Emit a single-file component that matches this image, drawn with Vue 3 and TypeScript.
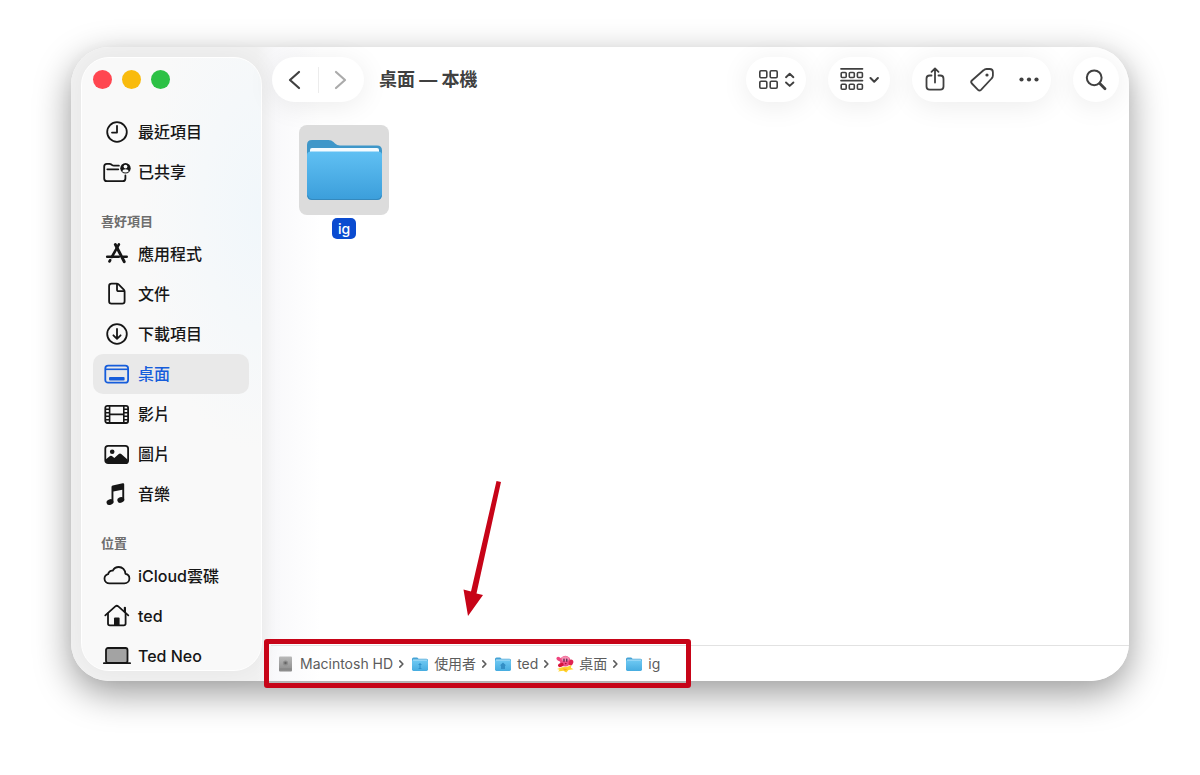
<script setup lang="ts">
import { ref } from 'vue'

interface Place {
  label: string
  icon: string
}
interface Section {
  title?: string
  places: Place[]
}
interface Crumb {
  label: string
  icon: string
}

const sections: Section[] = [
  {
    places: [
      { label: '最近項目', icon: 'clock' },
      { label: '已共享', icon: 'shared' },
    ],
  },
  {
    title: '喜好項目',
    places: [
      { label: '應用程式', icon: 'apps' },
      { label: '文件', icon: 'document' },
      { label: '下載項目', icon: 'download' },
      { label: '桌面', icon: 'desktop' },
      { label: '影片', icon: 'film' },
      { label: '圖片', icon: 'photo' },
      { label: '音樂', icon: 'music' },
    ],
  },
  {
    title: '位置',
    places: [
      { label: 'iCloud雲碟', icon: 'cloud' },
      { label: 'ted', icon: 'house' },
      { label: 'Ted Neo', icon: 'laptop' },
    ],
  },
]

const crumbs: Crumb[] = [
  { label: 'Macintosh HD', icon: 'disk' },
  { label: '使用者', icon: 'folder-users' },
  { label: 'ted', icon: 'folder-home' },
  { label: '桌面', icon: 'kirby' },
  { label: 'ig', icon: 'folder-small' },
]

const current = ref('桌面')
</script>

<template>
  <div class="screen">
    <svg class="sprite" aria-hidden="true">
      <defs>
        <linearGradient id="folder-front" x1="0" y1="0" x2="0" y2="1">
          <stop offset="0" stop-color="#60c0f3" />
          <stop offset="1" stop-color="#3b9edb" />
        </linearGradient>
        <linearGradient id="folder-mini" x1="0" y1="0" x2="0" y2="1">
          <stop offset="0" stop-color="#6fc9f3" />
          <stop offset="1" stop-color="#46ace0" />
        </linearGradient>
        <linearGradient id="disk-body" x1="0" y1="0" x2="0" y2="1">
          <stop offset="0" stop-color="#b9b9b9" />
          <stop offset="1" stop-color="#8a8a8a" />
        </linearGradient>
      </defs>

      <symbol id="clock" viewBox="0 0 28 28">
        <g fill="none" stroke="currentColor" stroke-width="1.8" stroke-linecap="round" stroke-linejoin="round">
          <circle cx="14" cy="14" r="9.8" />
          <path d="M14 7.8V14.6H9" />
        </g>
      </symbol>
      <symbol id="shared" viewBox="0 0 28 28">
        <g fill="none" stroke="currentColor" stroke-width="1.8" stroke-linecap="round" stroke-linejoin="round">
          <path d="M22.4 17.4v3q0 2.7-2.7 2.7H3.9q-2.7 0-2.7-2.7V8.4q0-2.6 2.6-2.6h2.6q1.2 0 2 .7l.7.6q.7.6 1.8.6h5M4.3 11.3h11" />
        </g>
        <circle cx="22.5" cy="10.2" r="5.2" fill="currentColor" />
        <circle cx="22.5" cy="8.6" r="1.9" fill="#fafbfb" />
        <path d="M19.2 13.300q.5-2.100 3.300-2.100t3.300 2.100q-1.400 1.200-3.300 1.200t-3.300-1.200Z" fill="#fafbfb" />
      </symbol>
      <symbol id="apps" viewBox="0 0 28 28">
        <g fill="none" stroke="currentColor" stroke-linecap="round">
          <path d="M12.4 4.6 21.2 21.6" stroke-width="3" />
          <path d="M15.900 4.400 8.800 17" stroke-width="2.600" />
          <path d="M4.200 16.800h11.600M20.400 16.800h3.300M6.400 21.500l.8-1.300" stroke-width="2.600" />
        </g>
      </symbol>
      <symbol id="document" viewBox="0 0 28 28">
        <g fill="none" stroke="currentColor" stroke-width="1.8" stroke-linejoin="round">
          <path d="M8.500 3.600h5.200q1.100 0 1.900.8l5.200 5.200q.8.8.8 2v9.600q0 2.400-2.400 2.400H8.500q-2.400 0-2.400-2.400V6q0-2.400 2.400-2.400Z" />
          <path d="M14 3.800v5.600q0 1.800 1.800 1.800h5.500" />
        </g>
      </symbol>
      <symbol id="download" viewBox="0 0 28 28">
        <g fill="none" stroke="currentColor" stroke-width="1.8" stroke-linecap="round" stroke-linejoin="round">
          <circle cx="14" cy="14" r="9.8" />
          <path d="M14 9v9.400M10.400 15.300l3.600 3.500 3.600-3.500" />
        </g>
      </symbol>
      <symbol id="desktop" viewBox="0 0 28 28">
        <g fill="none" stroke="currentColor" stroke-width="1.8">
          <rect x="2.300" y="5.700" width="22.800" height="17" rx="2.800" />
          <path d="M2.400 9.300h22.600" stroke-width="1.600" />
        </g>
        <rect x="6" y="17" width="15.600" height="3.500" rx="1" fill="currentColor" />
      </symbol>
      <symbol id="film" viewBox="0 0 28 28">
        <g fill="none" stroke="currentColor" stroke-width="1.8">
          <rect x="2.300" y="5.800" width="22.800" height="17.200" rx="2" />
          <path d="M6.600 5.800v17.200M20.800 5.800v17.200M6.600 14.400h14.200" stroke-width="1.600" />
          <path d="M2.400 9.200h4M2.400 12.700h4M2.400 16.200h4M2.400 19.700h4M21 9.200h4M21 12.700h4M21 16.200h4M21 19.700h4" stroke-width="1.400" />
        </g>
      </symbol>
      <symbol id="photo" viewBox="0 0 28 28">
        <rect x="2.300" y="5.800" width="22.800" height="17.400" rx="2.800" fill="none" stroke="currentColor" stroke-width="1.800" />
        <circle cx="9.200" cy="11.700" r="2.300" fill="currentColor" />
        <path d="M2.600 19.600 7 16.100q.9-.8 1.900 0l2.400 2 4.500-4.200q1.200-1 2.400 0l6.600 5.900v.8q0 2.400-2.400 2.400H5q-2.400 0-2.400-2.400Z" fill="currentColor" />
      </symbol>
      <symbol id="music" viewBox="0 0 28 28">
        <path d="M8.500 6.900q0-1.200 1.200-1.500l10-2.100q1.500-.3 1.500 1v16h-1.900V9.700l-8.900 1.900v10.900H8.500Z" fill="currentColor" />
        <ellipse cx="7" cy="22.100" rx="3.500" ry="2.800" transform="rotate(-18 7 22.100)" fill="currentColor" />
        <ellipse cx="17.800" cy="19.900" rx="3.500" ry="2.800" transform="rotate(-18 17.800 19.900)" fill="currentColor" />
      </symbol>
      <symbol id="cloud" viewBox="0 0 28 28">
        <path d="M6.600 21.300h14.700c3 0 5.100-2 5.100-4.800 0-2.500-1.600-4.400-4-4.700C22.300 8 19.400 5 15.800 5c-2.800 0-4.900 1.500-6 3.700-2.400-.4-4.400 1.200-4.600 3.500C3 12.800 1.500 14.500 1.500 16.700c0 2.700 2.200 4.600 5.100 4.600Z" fill="none" stroke="currentColor" stroke-width="1.800" stroke-linejoin="round" />
      </symbol>
      <symbol id="house" viewBox="0 0 28 28">
        <g fill="none" stroke="currentColor" stroke-width="1.800" stroke-linecap="round" stroke-linejoin="round">
          <path d="M2.300 13.300 12.600 4.200q1.200-1 2.400 0L25.300 13.300" />
          <path d="M5 11.500v10q0 1.800 1.800 1.800h14q1.800 0 1.800-1.800v-10" />
          <path d="M21.900 5.800v4" stroke-width="2.200" />
        </g>
        <path d="M11 23.500v-6.900q0-1 1-1h3.600q1 0 1 1v6.900Z" fill="currentColor" />
      </symbol>
      <symbol id="laptop" viewBox="0 0 28 28">
        <rect x="3" y="6" width="21.500" height="15" rx="2" fill="#a3a3a3" stroke="currentColor" stroke-width="1.800" />
        <path d="M.9 21.200h26.200" stroke="currentColor" stroke-width="1.800" stroke-linecap="round" />
      </symbol>

      <symbol id="disk" viewBox="0 0 18 18">
        <rect x="2" y="1.500" width="13" height="15" rx="1" fill="url(#disk-body)" />
        <path d="M2.500 14h12" stroke="#808080" stroke-width="1" />
        <circle cx="8.500" cy="8" r="2.600" fill="#8e8e8e" />
        <circle cx="8.500" cy="8" r="1.200" fill="#666" />
      </symbol>
      <symbol id="folder-small" viewBox="0 0 18 18">
        <path d="M1 4q0-1.600 1.600-1.600h3.600l1.400 1.300h7.900Q17 3.700 17 5.200V8H1Z" fill="#45a3d6" />
        <rect x="1" y="5" width="16" height="11" rx="1.400" fill="url(#folder-mini)" />
        <path d="M2 5h14" stroke="#b8e4fa" stroke-width="1" />
      </symbol>
      <symbol id="folder-users" viewBox="0 0 18 18">
        <use href="#folder-small" width="18" height="18" />
        <path d="M9 8v5M7.500 9.500h3M7.600 13.500h2.800" stroke="#2f92cb" stroke-width="1.100" fill="none" />
      </symbol>
      <symbol id="folder-home" viewBox="0 0 18 18">
        <use href="#folder-small" width="18" height="18" />
        <path d="M9 7.600 5.800 10.500H7v3.400h4v-3.400h1.200Z" fill="#348fc5" />
      </symbol>
      <symbol id="kirby" viewBox="0 0 18 18">
        <ellipse cx="2.900" cy="4" rx="2.600" ry="1.900" transform="rotate(35 2.900 4)" fill="#f0457f" />
        <circle cx="9.300" cy="6.200" r="5.400" fill="#ee4f86" />
        <ellipse cx="9.300" cy="3.700" rx="3.800" ry="2.500" fill="#f78db0" />
        <ellipse cx="15" cy="7.600" rx="2.200" ry="3" transform="rotate(20 15 7.600)" fill="#e02452" />
        <ellipse cx="4.800" cy="10" rx="2.900" ry="1.900" transform="rotate(-20 4.800 10)" fill="#d6153c" />
        <path d="M8 4v2.200M10.800 4v2.200" stroke="#3a1740" stroke-width="1.100" stroke-linecap="round" />
        <path d="M8.600 8h2.200l-1 1.500Z" fill="#a30f35" />
        <path d="m1 14 5-1.800 5.500-.4 4-1.800-.6 2.800 2.600 1.400-5 .8-2.200 2.500-3-1.800-5.300.8 1.700-1.800Z" fill="#ffd42e" />
        <path d="m6.500 13.600 5 .4-2.500 1.700Z" fill="#ffa51d" />
      </symbol>
    </svg>

    <div class="window">
      <aside class="sidebar">
        <div class="lights">
          <button class="light close" type="button" aria-label="關閉"></button>
          <button class="light minimize" type="button" aria-label="縮到最小"></button>
          <button class="light zoom" type="button" aria-label="縮放"></button>
        </div>
        <nav class="places" aria-label="側邊欄">
          <section v-for="(section, i) in sections" :key="i">
            <h2 v-if="section.title" class="heading">{{ section.title }}</h2>
            <ul>
              <li v-for="place in section.places" :key="place.label">
                <a
                  href="#"
                  class="place"
                  :class="{ active: place.label === current }"
                  @click.prevent="current = place.label"
                >
                  <svg class="place-icon" aria-hidden="true"><use :href="'#' + place.icon" /></svg>
                  <span>{{ place.label }}</span>
                </a>
              </li>
            </ul>
          </section>
        </nav>
      </aside>

      <main class="content">
        <header class="toolbar">
          <div class="pill history">
            <button type="button" aria-label="返回">
              <svg width="20" height="24" viewBox="0 0 20 24"><path d="M14 4 5 12l9 8" /></svg>
            </button>
            <span class="divider"></span>
            <button type="button" aria-label="往前" class="dim">
              <svg width="20" height="24" viewBox="0 0 20 24"><path d="m5 4 9 8-9 8" /></svg>
            </button>
          </div>
          <h1>桌面 — 本機</h1>
          <div class="tools">
            <button class="pill view" type="button" aria-label="顯示方式">
              <svg width="38" height="24" viewBox="0 0 38 24">
                <g stroke-width="1.600">
                  <rect x="2.800" y="2.800" width="7" height="7" rx="1.200" />
                  <rect x="13.200" y="2.800" width="7" height="7" rx="1.200" />
                  <rect x="2.800" y="13.200" width="7" height="7" rx="1.200" />
                  <rect x="13.200" y="13.200" width="7" height="7" rx="1.200" />
                </g>
                <path d="m29 9.200 3.700-3.400 3.700 3.400M29 14.500l3.700 3.400 3.700-3.400" stroke-width="1.900" />
              </svg>
            </button>
            <button class="pill group" type="button" aria-label="分組">
              <svg width="40" height="26" viewBox="0 0 40 26">
                <path d="M2 1.800h21.500M2 13.600h21.500" stroke-width="1.700" />
                <g stroke-width="1.600">
                  <rect x="2.200" y="5.500" width="5" height="5" rx="1" />
                  <rect x="10.300" y="5.500" width="5" height="5" rx="1" />
                  <rect x="18.400" y="5.500" width="5" height="5" rx="1" />
                  <rect x="2.200" y="17.300" width="5" height="5" rx="1" />
                  <rect x="10.300" y="17.300" width="5" height="5" rx="1" />
                  <rect x="18.400" y="17.300" width="5" height="5" rx="1" />
                </g>
                <path d="m31.500 11 3.700 3.700 3.700-3.700" stroke-width="2" />
              </svg>
            </button>
            <div class="pill actions">
              <button type="button" aria-label="分享">
                <svg width="28" height="28" viewBox="0 0 28 28">
                  <path d="M10.500 9.500H8.700q-3.200 0-3.200 3.200v7.800q0 3.200 3.200 3.200h10.600q3.200 0 3.200-3.200v-7.800q0-3.200-3.200-3.200h-1.800M14 16.500V2.500M10.500 5.800 14 2.400l3.500 3.400" />
                </svg>
              </button>
              <button type="button" aria-label="標籤">
                <svg width="28" height="28" viewBox="0 0 28 28">
                  <path d="M15.500 4.300q1.300-1.300 3-1.300h3.200q3.200 0 3.200 3.200v3.300q0 1.700-1.300 3L13 23.800q-1.500 1.500-3 0L3.900 17.500q-1.500-1.500 0-3Z" />
                  <circle cx="19" cy="9" r="1.600" class="solid" />
                </svg>
              </button>
              <button type="button" aria-label="更多">
                <svg width="28" height="28" viewBox="0 0 28 28" class="solid">
                  <circle cx="6.500" cy="13.500" r="2.100" />
                  <circle cx="14" cy="13.500" r="2.100" />
                  <circle cx="21.500" cy="13.500" r="2.100" />
                </svg>
              </button>
            </div>
            <button class="pill search" type="button" aria-label="搜尋">
              <svg width="24" height="24" viewBox="0 0 24 24">
                <circle cx="10.200" cy="9.800" r="7.400" stroke-width="2" />
                <path d="m15.800 15.500 5.200 5.200" stroke-width="2.800" />
              </svg>
            </button>
          </div>
        </header>

        <div class="files">
          <button class="file" type="button">
            <span class="thumb">
              <svg width="80" height="68" viewBox="0 0 80 68" aria-hidden="true">
                <path d="M3 9q0-5 5-5h16.500q3 0 5 2l1.500 1.500q2 2 5 2h37q5 0 5 5V30H3Z" fill="#3f97c9" />
                <rect x="6" y="12" width="69" height="10" rx="2" fill="#f4fbff" />
                <path d="M3 19q0-3.500 4-3.500h67q4 0 4 3.500v40q0 5-5 5H8q-5 0-5-5Z" fill="url(#folder-front)" />
                <path d="M3.500 59.500q.5 4 4.500 4h65q4 0 4.500-4" fill="none" stroke="#3589bd" stroke-width="1" />
              </svg>
            </span>
            <span class="name">ig</span>
          </button>
        </div>

        <footer class="pathbar">
          <nav class="path" aria-label="路徑">
            <template v-for="(crumb, i) in crumbs" :key="crumb.label">
              <svg v-if="i > 0" class="sep" width="7" height="10" viewBox="0 0 7 10" aria-hidden="true">
                <path d="m1.800 1.900 3.100 3.100-3.100 3.100" />
              </svg>
              <a href="#" class="crumb" @click.prevent>
                <svg width="18" height="18" aria-hidden="true"><use :href="'#' + crumb.icon" /></svg>
                <span>{{ crumb.label }}</span>
              </a>
            </template>
            <svg class="arrow" width="42" height="138" viewBox="0 0 42 138" aria-hidden="true">
              <path d="M34.500 1 39 2 14.500 113.500l6.500 1.500L6 136 1.500 109.500l7.500 1.900Z" />
            </svg>
          </nav>
        </footer>
      </main>
    </div>
  </div>
</template>

<style>
body {
  margin: 0;
  background: #fff;
}
</style>

<style scoped>
.screen {
  box-sizing: border-box;
  height: 100vh;
  padding: 47px 71px 94px;
  overflow: hidden;
  font-family: Inter, 'Noto Sans CJK TC', sans-serif;
  color: #161616;
}
.sprite {
  position: absolute;
  width: 0;
  height: 0;
}
.window {
  box-sizing: border-box;
  height: 100%;
  display: flex;
  border-radius: 38px;
  background: linear-gradient(to right, #f1f1f1 186px, #f9f9fb 204px, #fff 250px);
  box-shadow: 0 12px 36px rgba(0, 0, 0, 0.4);
}
button {
  padding: 0;
  border: 0;
  background: none;
  font: inherit;
  color: inherit;
}
a {
  color: inherit;
  text-decoration: none;
}
ul {
  margin: 0;
  padding: 0;
  list-style: none;
}

.sidebar {
  box-sizing: border-box;
  flex: 0 0 181px;
  margin: 10px 9px 10px 10px;
  padding: 12px 12px 0 11px;
  overflow: hidden;
  border: 1px solid #fff;
  border-radius: 28px;
  background: radial-gradient(120px 240px at 100% 25%, #f1f7fb, transparent), #f9f9f9;
  box-shadow: 0 0 26px rgba(0, 0, 0, 0.05);
}
.lights {
  display: flex;
  gap: 10px;
  margin-bottom: 23px;
}
.light {
  width: 19px;
  height: 19px;
  border-radius: 50%;
}
.close {
  background: #ff4650;
}
.minimize {
  background: #f9bb0d;
}
.zoom {
  background: #2cc145;
}
.heading {
  box-sizing: border-box;
  height: 42px;
  margin: 0;
  padding: 19px 8px 0;
  font-size: 13px;
  line-height: 20px;
  font-weight: 600;
  color: #6e6e6e;
}
.place {
  box-sizing: border-box;
  height: 40px;
  display: flex;
  align-items: center;
  gap: 7px;
  padding: 0 10px;
  border-radius: 10px;
  font-size: 16px;
  line-height: 24px;
  font-weight: 500;
  white-space: nowrap;
}
.place.active {
  background: #e9e9e9;
  color: #165ddb;
}
.place-icon {
  flex: none;
  width: 28px;
  height: 28px;
}

.content {
  flex: 1;
  min-width: 0;
  display: flex;
  flex-direction: column;
}
.toolbar {
  display: flex;
  align-items: center;
  padding: 10px 10px 0 1px;
}
.toolbar svg {
  display: block;
  fill: none;
  stroke: #404040;
  stroke-width: 1.8;
  stroke-linecap: round;
  stroke-linejoin: round;
}
.toolbar .solid {
  fill: #404040;
  stroke: none;
}
.pill {
  height: 45px;
  display: flex;
  align-items: center;
  justify-content: center;
  border-radius: 23px;
  background: #fff;
  box-shadow: 0 4px 28px rgba(0, 0, 0, 0.08);
}
.history {
  width: 92px;
}
.history button {
  flex: 1;
  display: flex;
  justify-content: center;
}
.history svg {
  stroke-width: 2.2;
}
.history .dim svg {
  stroke: #ababab;
}
.divider {
  width: 1px;
  height: 26px;
  background: #ececec;
}
h1 {
  margin: 0 0 0 15px;
  font-size: 18px;
  line-height: 26px;
  font-weight: 700;
  color: #404040;
  white-space: nowrap;
}
.tools {
  display: flex;
  gap: 22px;
  margin-left: auto;
}
.view {
  width: 60px;
}
.group {
  width: 62px;
}
.actions {
  width: 139px;
}
.actions button {
  flex: 0 0 47px;
  display: flex;
  justify-content: center;
}
.search {
  width: 46px;
}

.files {
  flex: 1;
  padding: 23px 28px;
}
.file {
  display: flex;
  flex-direction: column;
  align-items: center;
  gap: 3px;
}
.thumb {
  width: 90px;
  height: 90px;
  display: flex;
  align-items: center;
  justify-content: center;
  border-radius: 8px;
  background: #dcdcdc;
}
.name {
  padding: 0 6px;
  border-radius: 5px;
  background: #0a4bd0;
  color: #fff;
  font-size: 14px;
  line-height: 21px;
  font-weight: 500;
}

.pathbar {
  display: flex;
  height: 35px;
  border-top: 1px solid #e2e2e2;
}
.path {
  position: relative;
  display: flex;
  align-items: center;
  gap: 5px;
  padding: 0 24px 0 6px;
  font-size: 14px;
  line-height: 20px;
  color: #5c5c5c;
  white-space: nowrap;
}
.path::after {
  content: '';
  position: absolute;
  inset: -7px;
  border: 5px solid #c70418;
  border-radius: 3px;
  pointer-events: none;
}
.crumb {
  display: flex;
  align-items: center;
  gap: 5px;
}
.sep {
  margin-right: 1px;
  fill: none;
  stroke: #5c5c5c;
  stroke-width: 1.6;
  stroke-linecap: round;
  stroke-linejoin: round;
}
.arrow {
  position: absolute;
  left: 191px;
  bottom: 63px;
  fill: #c70418;
  pointer-events: none;
}
</style>
